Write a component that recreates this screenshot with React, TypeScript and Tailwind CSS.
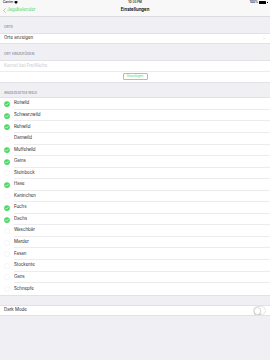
import React from "react";

const animals: [string, boolean][] = [
  ["Rotwild", true],
  ["Schwarzwild", true],
  ["Rehwild", true],
  ["Damwild", false],
  ["Muffelwild", true],
  ["Gams", true],
  ["Steinbock", false],
  ["Hase", true],
  ["Kaninchen", false],
  ["Fuchs", true],
  ["Dachs", true],
  ["Waschbär", false],
  ["Marder", false],
  ["Fasan", false],
  ["Stockente", false],
  ["Gans", false],
  ["Schnepfe", false],
];

function Check({ on }: { on: boolean }) {
  return (
    <svg width="6" height="6" viewBox="0 0 24 24" className="block">
      {on ? (
        <>
          <circle cx="12" cy="12" r="11.5" fill="#4cd964" />
          <path d="M6.5 12.5l3.8 3.8 7.5-8" stroke="#fff" strokeWidth="2.6" fill="none" strokeLinecap="round" strokeLinejoin="round" />
        </>
      ) : (
        <circle cx="12" cy="12" r="11" fill="none" stroke="#d6d6da" strokeWidth="1" />
      )}
    </svg>
  );
}

export default function App() {
  return (
    <div
      className="w-[270px] h-[360px] bg-[#efeff4] overflow-hidden text-[#2a2a2a] text-[4.4px] leading-[4.4px] flex flex-col"
      style={{ fontFamily: "Inter, 'Liberation Sans', sans-serif" }}
    >
      {/* status + nav */}
      <div className="bg-[#f8f8f8] border-b border-[#dcdcdf] shrink-0">
        <div className="h-[5.3px] overflow-hidden flex items-center justify-between px-[3px] text-[3px] leading-[3px] font-semibold relative">
          <div className="flex items-center gap-[1px]">
            <span>Carrier</span>
            <svg width="4" height="3" viewBox="0 0 10 8" className="block">
              <path d="M5 8L0 2.5a7 7 0 0110 0z" fill="#000" />
            </svg>
          </div>
          <div className="absolute left-0 right-0 text-center">10:35 PM</div>
          <div className="flex items-center gap-[1px]">
            <span>100%</span>
            <div className="w-[6.5px] h-[2.6px] bg-black rounded-[0.5px]" />
            <div className="w-[0.5px] h-[1.2px] bg-black" />
          </div>
        </div>
        <div className="h-[10.6px] overflow-hidden flex items-center relative">
          <div className="flex items-center pl-[2.5px] text-[#4cd964]">
            <svg width="3" height="5" viewBox="0 0 6 10" className="block mr-[1.5px]">
              <path d="M5 1L1 5l4 4" stroke="#4cd964" strokeWidth="1.3" fill="none" strokeLinecap="round" strokeLinejoin="round" />
            </svg>
            <span>Jagdkalender</span>
          </div>
          <div className="absolute left-0 right-0 text-center font-semibold text-black">Einstellungen</div>
        </div>
      </div>

      <div className="h-[15.8px] shrink-0 flex items-end pl-[4px] pb-[3px] text-[3.4px] leading-[3.4px] text-[#6d6d72]">
        ORTE
      </div>
      <div className="bg-white border-y border-[#e2e2e6] h-[11.6px] shrink-0 overflow-hidden flex items-center justify-between pl-[4px] pr-[5px]">
        <span>Orte anzeigen</span>
        <svg width="2" height="3" viewBox="0 0 6 10" className="block">
          <path d="M1 1l4 4-4 4" stroke="#c7c7cc" strokeWidth="1.4" fill="none" />
        </svg>
      </div>

      <div className="h-[15.7px] shrink-0 flex items-end pl-[4px] pb-[3.3px] text-[3.4px] leading-[3.4px] text-[#6d6d72]">
        ORT HINZUFÜGEN
      </div>
      <div className="bg-white border-y border-[#e2e2e6] shrink-0 flex flex-col">
        <div className="h-[10.8px] overflow-hidden flex items-center pl-[4px] text-[#c7c7cd] border-b border-[#ececef]">
          Kanzel bei Freifläche
        </div>
        <div className="h-[10.4px] overflow-hidden flex items-center justify-center">
          <div className="w-[25px] h-[7px] border border-[#7ee08f] rounded-[1px] flex items-center justify-center text-[3px] leading-[3px] text-[#4cd964]">
            Hinzufügen
          </div>
        </div>
      </div>

      <div className="h-[14.2px] shrink-0 flex items-end pl-[4px] pb-[1.7px] text-[3.4px] leading-[3.4px] text-[#6d6d72]">
        ANGEZEIGTES WILD
      </div>
      <div className="bg-white border-y border-[#e2e2e6] shrink-0 flex flex-col">
        {animals.map(([name, on], i) => (
          <div key={name} className="h-[11.56px] shrink-0 overflow-hidden flex items-center">
            <div className="w-[14px] h-full flex items-center justify-center pl-[0.5px]">
              <Check on={on} />
            </div>
            <div
              className={
                i < animals.length - 1
                  ? "flex-1 h-full flex items-center border-b border-[#ececef]"
                  : "flex-1 h-full flex items-center"
              }
            >
              {name}
            </div>
          </div>
        ))}
      </div>

      <div className="h-[9.1px] shrink-0" />
      <div className="bg-white border-y border-[#e2e2e6] h-[11.6px] shrink-0 overflow-hidden flex items-center justify-between pl-[4px] pr-[4px]">
        <span>Dark Mode</span>
        <div className="w-[13.5px] h-[8.2px] rounded-full border border-[#e5e5ea] bg-white relative">
          <div className="absolute left-0 top-0 w-[7.4px] h-[7.4px] rounded-full bg-white shadow-[0_0.5px_1px_rgba(0,0,0,0.25)] border border-[#e0e0e0]" />
        </div>
      </div>
    </div>
  );
}
